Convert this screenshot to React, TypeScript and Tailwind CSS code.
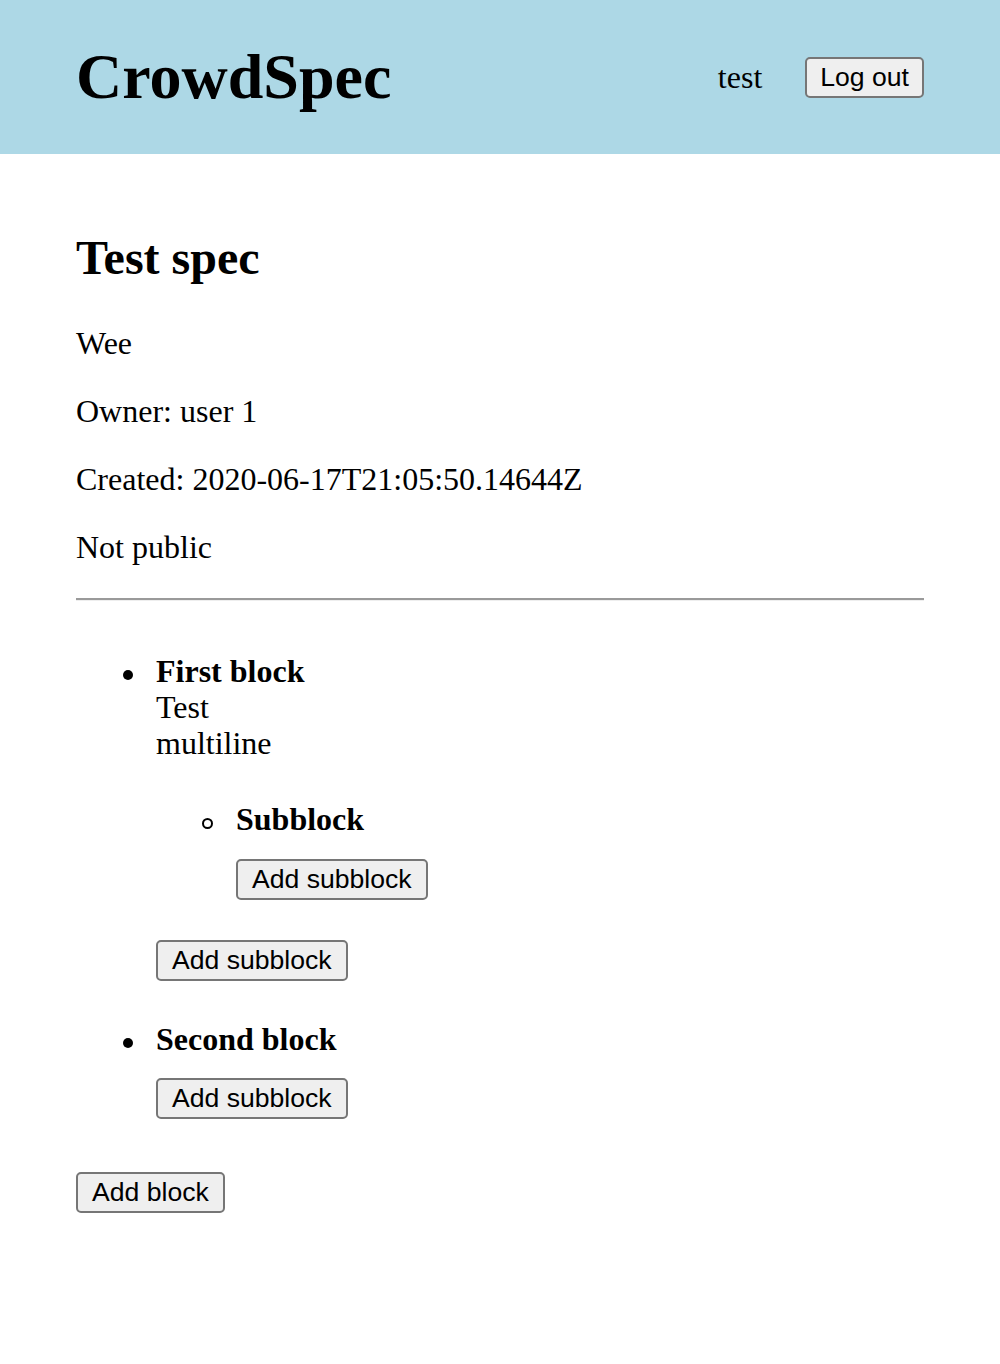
import React from 'react';

type Block = {
    id: number;
    title: string;
    description?: string;
    children: Block[];
};

const blocks: Block[] = [
    {
        id: 1,
        title: 'First block',
        description: 'Test\nmultiline',
        children: [{ id: 3, title: 'Subblock', children: [] }],
    },
    { id: 2, title: 'Second block', children: [] },
];

function NativeButton({ children, className = '' }: { children: React.ReactNode; className?: string }) {
    return (
        <button
            className={`flex h-[41px] items-center rounded-[5px] border-2 border-[#767676] bg-[#efefef] font-['Liberation_Sans',Arial,sans-serif] text-[26.6px] leading-[31px] text-black ${className}`}
        >
            {children}
        </button>
    );
}

// list item with a drawn marker (disc or circle), 28px left of the text
function Item({ circle = false, className = '', children }: { circle?: boolean; className?: string; children: React.ReactNode }) {
    return (
        <li className={`-ml-[40px] flex ${className}`}>
            <div className="w-[40px] shrink-0">
                {circle ? (
                    <div className="ml-[6px] mt-[17px] h-[11px] w-[11px] rounded-full border-2 border-black" />
                ) : (
                    <div className="ml-[7px] mt-[17px] h-[10px] w-[10px] rounded-full bg-black" />
                )}
            </div>
            <div className="min-w-0 flex-1">{children}</div>
        </li>
    );
}

export default function App() {
    return (
        <div className="min-h-[1364px] bg-white font-['Liberation_Serif','Times_New_Roman',serif] text-[32px] leading-[36px] text-black">
            {/* Header */}
            <header className="flex h-[154px] items-center justify-between bg-[#add8e6] px-[76px]">
                <h1 className="text-[64px] font-bold leading-[74px]">CrowdSpec</h1>
                <div className="flex items-center gap-[43px]">
                    <span>test</span>
                    <NativeButton className="h-[40px] px-[13px]">Log out</NativeButton>
                </div>
            </header>

            {/* Spec detail */}
            <main className="px-[76px] pt-[76px]">
                <h2 className="text-[48px] font-bold leading-[55px]">Test spec</h2>
                <p className="mt-[40px]">Wee</p>
                <p className="mt-[32px]">Owner: user 1</p>
                <p className="mt-[32px]">Created: 2020-06-17T21:05:50.14644Z</p>
                <p className="mt-[32px]">Not public</p>

                <hr className="mt-[33px] h-0 border-0 border-t-2 border-b border-t-[#9a9a9a] border-b-[#eeeeee]" />

                <ul className="mt-[52px] pl-[80px]">
                    {/* First block */}
                    <Item>
                        <strong className="block font-bold">{blocks[0].title}</strong>
                        <div className="whitespace-pre-line">{blocks[0].description}</div>
                        <ul className="mt-[40px] pl-[80px]">
                            <Item circle>
                                <strong className="block font-bold">{blocks[0].children[0].title}</strong>
                                <NativeButton className="mt-[22px] px-[14px]">Add subblock</NativeButton>
                            </Item>
                        </ul>
                        <NativeButton className="mt-[40px] px-[14px]">Add subblock</NativeButton>
                    </Item>

                    {/* Second block */}
                    <Item className="mt-[40px]">
                        <strong className="block font-bold">{blocks[1].title}</strong>
                        <NativeButton className="mt-[21px] px-[14px]">Add subblock</NativeButton>
                    </Item>
                </ul>

                <NativeButton className="mt-[53px] px-[14px]">Add block</NativeButton>
            </main>
        </div>
    );
}
